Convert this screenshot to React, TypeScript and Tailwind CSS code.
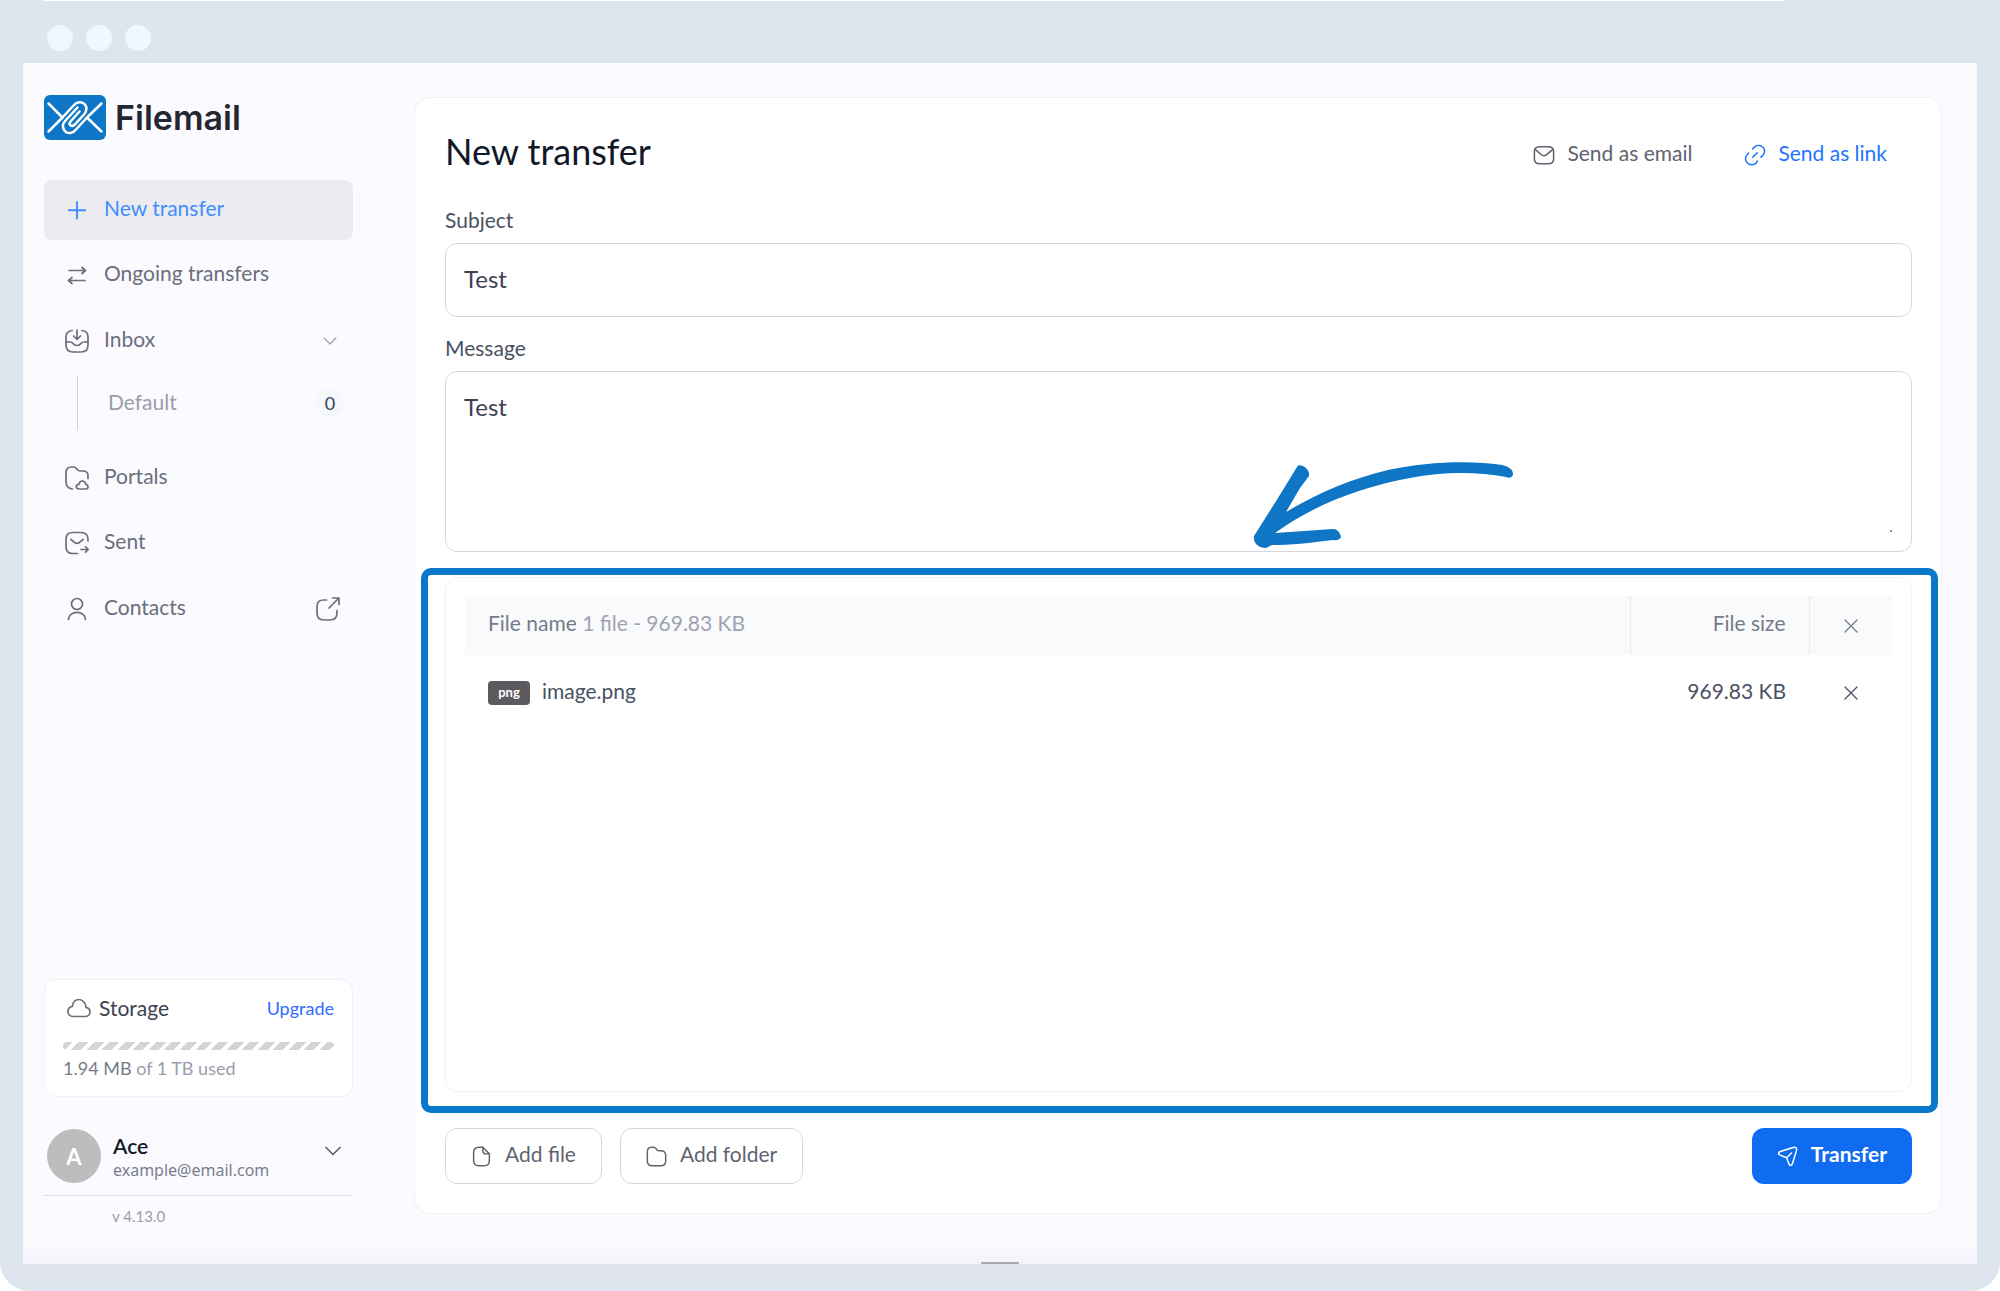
import React from "react";

type IconProps = { className?: string; children?: React.ReactNode };

const Icon = ({ className, children }: IconProps) => (
  <svg
    viewBox="0 0 24 24"
    fill="none"
    stroke="currentColor"
    strokeWidth="1.7"
    strokeLinecap="round"
    strokeLinejoin="round"
    aria-hidden="true"
    className={className}
  >
    {children}
  </svg>
);

const icons = {
  plus: <path d="M12 4v16.500M3.700 12.200h16.600" strokeWidth="1.900" />,
  transfers: (
    <path d="M4 7.500h16M17 4.500l3.500 3-3.500 3M20 17.500H4M7 14.500l-3.500 3 3.500 3" />
  ),
  inbox: (
    <>
      <path d="M12 1v9M8.500 7l3.500 3.500L15.500 7" />
      <path d="M7 1.500C3 2 1 3.500 1 8v8c0 5 2 7 7 7h8c5 0 7-2 7-7V8c0-4.500-2-6-6-6.500" />
      <path d="M1 13h4c1.500 0 2.300.5 3 1.500 1 1.500 2 2 4 2s3-.5 4-2c.7-1 1.500-1.500 3-1.500h4" />
    </>
  ),
  portals: (
    <>
      <path d="M7.500 23C3 22.500 1 20 1 15.500V6.500C1 3 3 1 6.500 1h1.800c1.500 0 2.500.6 3.300 1.600l.8 1c.6.9 1.500 1.400 3 1.400H18c3.500 0 5 2 5 5v2.500" />
      <path d="M14.500 23h6c1.500 0 2.500-1 2.500-2.300 0-1.200-.8-2-2-2.200-.5-2-1.800-3.500-3.700-3.500-1.800 0-3 1.300-3.300 3.300-1.700 0-2.700 1-2.700 2.300s1.200 2.400 3.200 2.400z" />
    </>
  ),
  sent: (
    <>
      <path d="M12.500 22.500H8c-5 0-7-2-7-7v-7c0-5 2-7 7-7h8c5 0 7 2 7 7v1.500" />
      <path d="M6 8.500l3.500 2.800c1.500 1.200 3.500 1.200 5 0L18 8.500" />
      <path d="M16 18.500h7M20.500 15.800l2.700 2.700-2.700 2.700" />
    </>
  ),
  contacts: (
    <>
      <circle cx="12" cy="7" r="5.500" />
      <path d="M3.500 22.500c0-4.300 3.800-7.200 8.500-7.200s8.500 2.900 8.500 7.200" />
    </>
  ),
  external: (
    <>
      <path d="M13 11L23 1M16.500 1H23v6.500" />
      <path d="M10.500 3H8C3 3 1 5 1 10v6c0 5 2 7 7 7h6c5 0 7-2 7-7v-2.500" />
    </>
  ),
  chevron: <path d="M5 8.500l7 7 7-7" />,
  mail: (
    <>
      <path d="M7 3h10c4 0 5.500 2 5.500 5.500v7.500c0 3.500-1.500 5.500-5.500 5.500H7c-4 0-5.500-2-5.500-5.500V8.500C1.500 5 3 3 7 3z" />
      <path d="M3 6.500l6.200 5.200c1.700 1.400 3.900 1.400 5.600 0L21 6.500" />
    </>
  ),
  link: (
    <>
      <path d="M9.500 5.500l1.300-1.800C14 1 18 .800 20.700 3.500s2.300 6.500-.7 9.500l-1.500 1.300" />
      <path d="M14.500 18.500l-1.300 2.300C10 23 6 23 3.500 20.500S1 14 3.500 11.500l1.500-1.500" />
      <path d="M9.500 14.500l5-5" />
    </>
  ),
  cloud: (
    <path d="M6.500 20.500h11.500c3 0 5-2 5-4.600 0-2.500-1.700-4.200-4-4.600C18.600 7 15.800 3.500 12 3.500S5.800 6.300 5.300 10.500C2.700 10.800 1 12.800 1 15.400c0 3 2.200 5.100 5.500 5.100z" />
  ),
  file: (
    <>
      <path d="M13.500 1.500H9c-4 0-6 2-6 6v9c0 4 2 6 6 6h6c4 0 6-2 6-6V9z" />
      <path d="M13.500 1.500V5c0 3 1 4 4 4H21" />
    </>
  ),
  folder: (
    <path d="M1.500 7c0-3.500 1.500-5.500 5-5.500h1.800c1.500 0 2.500.6 3.300 1.600l.8 1c.6.900 1.500 1.400 3 1.400H17c4 0 5.500 2 5.500 5.500v6c0 4-2 5.500-5.500 5.500H7c-3.500 0-5.500-1.500-5.500-5.500z" />
  ),
  send: (
    <>
      <path d="M3.800 6.200l14.500-4.500c3-.9 4.700.7 3.900 3.700l-4.500 14.500c-1 3-3 3-4.200.3l-2.500-6.700-6.900-2.800C1.200 9.500 1 7.200 3.800 6.200z" />
      <path d="M11 13.500l5.500-5.500" />
    </>
  ),
  close: <path d="M4 4l16 16M20 4L4 20" />,
};

const Logo = () => (
  <a href="#" className="flex items-center gap-[9px] text-[#25262f]">
    <svg viewBox="0 0 62 45" fill="none" aria-hidden="true" className="h-[45px] w-[62px]">
      <rect width="62" height="45" rx="6" fill="#0d76c6" />
      <g stroke="#fff" strokeWidth="2.500" strokeLinecap="round" strokeLinejoin="round">
        <path d="M4.500 8.500L18.500 22.500 4.500 36.500" />
        <path d="M57.500 8.500L43 22.500 57.500 36.500" />
        <path d="M18.500 22.500L29.500 10.500C33 6.500 38 6 41 9.500C43.500 13 42.500 16.500 40 19.500L30.500 29.800C27.500 32.500 24 29.500 26.500 26.500L35.500 16.500" />
        <path d="M43 22.500L32.500 34C29 38.500 23.500 39.500 20.800 36C18 32.500 18.800 28.500 21.500 25.500L33.500 12.500" />
      </g>
    </svg>
    <span className="font-['Inter'] text-[34px] leading-[45px] font-semibold">Filemail</span>
  </a>
);

const rowClass = "flex h-[60px] items-center gap-[15px] rounded-lg pr-[13px] pl-[21px]";

const Sidebar = () => (
  <aside className="flex w-[309px] shrink-0 flex-col">
    <Logo />
    <nav className="mt-10 flex flex-col text-[21px] text-[#6b6f7d]">
      <a href="#" className={`${rowClass} bg-[#ececf0] text-[#3f8cff]`}>
        <Icon className="size-6">{icons.plus}</Icon>
        <span className="pb-1">New transfer</span>
      </a>
      <a href="#" className={`${rowClass} mt-[5px]`}>
        <Icon className="size-6">{icons.transfers}</Icon>
        <span className="pb-1">Ongoing transfers</span>
      </a>
      <a href="#" className={`${rowClass} mt-[6px]`}>
        <Icon className="size-6">{icons.inbox}</Icon>
        <span className="pb-1">Inbox</span>
        <Icon className="ml-auto size-5 text-[#a5a7b0]">{icons.chevron}</Icon>
      </a>
      <a
        href="#"
        className="mt-[5px] ml-[33px] flex h-[54px] items-center justify-between border-l border-[#cfcfd8] pr-[9px] pl-[30px] text-[#9a9daa]"
      >
        <span className="pb-[2px]">Default</span>
        <span className="flex size-7 items-center justify-center rounded-full bg-[#f6f7fa] text-[18px] text-[#33415c]">
          0
        </span>
      </a>
      <a href="#" className={`${rowClass} mt-[18px]`}>
        <Icon className="size-6">{icons.portals}</Icon>
        <span className="pb-1">Portals</span>
      </a>
      <a href="#" className={`${rowClass} mt-[5px]`}>
        <Icon className="size-6">{icons.sent}</Icon>
        <span className="pb-1">Sent</span>
      </a>
      <a href="#" className={`${rowClass} mt-[6px]`}>
        <Icon className="size-6">{icons.contacts}</Icon>
        <span className="pb-1">Contacts</span>
        <Icon className="ml-auto size-6">{icons.external}</Icon>
      </a>
    </nav>

    <section className="mt-auto rounded-xl border border-[#f0f0f5] bg-white px-[18px] pt-4 pb-4">
      <div className="flex items-center gap-2 pl-1">
        <Icon className="size-6 text-[#6b6f7d]">{icons.cloud}</Icon>
        <h2 className="text-[21px] leading-6 text-[#3c4150]">Storage</h2>
        <a href="#" className="ml-auto text-[18px] leading-6 text-[#2f6bff]">
          Upgrade
        </a>
      </div>
      <div className="mt-[22px] h-2 rounded-full bg-[repeating-linear-gradient(135deg,#d4d4d4_0_7px,#fff_7px_11px)]" />
      <p className="mt-[6px] text-[18px] leading-6 text-[#9a9daa]">
        <span className="text-[#777b89]">1.94 MB</span> of 1 TB used
      </p>
    </section>

    <button
      type="button"
      className="mt-8 flex items-center gap-3 border-b border-[#dcdce2] pb-3 pl-[3px] text-left"
    >
      <span className="flex size-[54px] items-center justify-center rounded-full bg-[#bdbdbd] text-[22px] font-bold text-white">
        A
      </span>
      <span className="flex flex-col pt-[3px]">
        <span className="text-[21px] leading-6 font-semibold text-[#111827]">Ace</span>
        <span className="font-['Noto_Sans'] text-[16px] leading-6 text-[#7b7d8e]">
          example@email.com
        </span>
      </span>
      <Icon className="mr-2 mb-[10px] ml-auto size-6 text-[#5f6370]">{icons.chevron}</Icon>
    </button>
    <p className="mt-2 pl-[68px] text-[15px] leading-6 text-[#9a9daa]">v 4.13.0</p>
  </aside>
);

const files = [{ type: "png", name: "image.png", size: "969.83 KB" }];

const FileTable = () => (
  <table className="w-full table-fixed text-[21px] text-[#4a5163]">
    <colgroup>
      <col />
      <col className="w-[179px]" />
      <col className="w-[83px]" />
    </colgroup>
    <thead className="bg-[#f9fafc] text-[#777b89]">
      <tr className="h-[59px]">
        <th className="px-[23px] pb-[6px] text-left font-normal">
          File name <span className="text-[#9fa2b0]">1 file - 969.83 KB</span>
        </th>
        <th className="border-x border-[#e8e8ed] px-[23px] pb-[6px] text-right font-normal">
          File size
        </th>
        <th>
          <button type="button" aria-label="Remove all files" className="flex w-full justify-center">
            <Icon className="size-[18px]">{icons.close}</Icon>
          </button>
        </th>
      </tr>
    </thead>
    <tbody>
      {files.map((file) => (
        <tr key={file.name} className="h-[76px]">
          <td className="px-[23px]">
            <span className="flex items-center gap-3">
              <span className="flex h-6 w-[42px] items-center justify-center rounded-sm bg-[#5c5a5f] pb-[2px] text-[13px] leading-4 font-bold text-white">
                {file.type}
              </span>
              <span className="pb-1">{file.name}</span>
            </span>
          </td>
          <td className="px-[23px] pb-1 text-right">{file.size}</td>
          <td>
            <button
              type="button"
              aria-label={`Remove ${file.name}`}
              className="flex w-full justify-center"
            >
              <Icon className="size-[18px]">{icons.close}</Icon>
            </button>
          </td>
        </tr>
      ))}
    </tbody>
  </table>
);

const TransferForm = () => (
  <form className="relative mt-[2px] mb-[14px] flex min-w-0 flex-1 flex-col rounded-2xl border border-[#f0f0f5] bg-white pt-[31px] pr-[29px] pb-[29px] pl-[30px]">
    <div className="flex items-center justify-between">
      <h1 className="text-[36px] leading-[44px] text-[#111827]">New transfer</h1>
      <div className="flex gap-[52px] pt-2 pr-[25px] text-[21px]">
        <button type="button" className="flex items-center gap-3 text-[#5f6370]">
          <Icon className="size-[22px]">{icons.mail}</Icon>
          <span className="pb-1">Send as email</span>
        </button>
        <button type="button" className="flex items-center gap-3 text-[#1f75fe]">
          <Icon className="size-[22px]">{icons.link}</Icon>
          <span className="pb-1">Send as link</span>
        </button>
      </div>
    </div>

    <label htmlFor="subject" className="mt-8 text-[21px] leading-[30px] text-[#4a5163]">
      Subject
    </label>
    <input
      id="subject"
      defaultValue="Test"
      className="mt-2 h-[74px] rounded-xl border border-[#d6d6de] px-[18px] pb-1 text-[24px] text-[#3c4150]"
    />
    <label htmlFor="message" className="mt-4 text-[21px] leading-[30px] text-[#4a5163]">
      Message
    </label>
    <div className="relative mt-2 flex flex-col">
      <textarea
        id="message"
        defaultValue="Test"
        className="h-[181px] resize-none rounded-xl border border-[#d6d6de] px-[18px] py-5 text-[24px] leading-[30px] text-[#3c4150]"
      />
      <span className="absolute right-5 bottom-5 size-[2px] bg-[#8d8f99]" />
    </div>

    <div className="mt-4 -mr-[26px] -ml-6 flex flex-1 flex-col rounded-[10px] border-[7px] border-[#0a78c8] pt-[2px] pr-[19px] pb-[14px] pl-[17px]">
      <div className="flex-1 rounded-xl border border-[#f3f3f7] px-[19px] pt-[18px]">
        <FileTable />
      </div>
    </div>

    <div className="mt-[15px] flex items-center gap-[18px] text-[21px]">
      <button
        type="button"
        className="flex h-14 items-center gap-[13px] rounded-xl border border-[#d6d6de] px-[25px] text-[#5f6370]"
      >
        <Icon className="size-[21px]">{icons.file}</Icon>
        <span className="pb-1">Add file</span>
      </button>
      <button
        type="button"
        className="flex h-14 items-center gap-[13px] rounded-xl border border-[#d6d6de] px-[25px] text-[#5f6370]"
      >
        <Icon className="size-[21px]">{icons.folder}</Icon>
        <span className="pb-1">Add folder</span>
      </button>
      <button
        type="submit"
        className="ml-auto flex h-14 items-center gap-[13px] rounded-xl bg-[#0f6cf0] px-[25px] font-bold text-white"
      >
        <Icon className="size-[21px]">{icons.send}</Icon>
        <span className="pb-1">Transfer</span>
      </button>
    </div>

    {/* hand drawn pointer over the file list */}
    <svg
      viewBox="0 0 320 120"
      aria-hidden="true"
      className="pointer-events-none absolute top-[343px] left-1/2 ml-[42px] h-[120px] w-[320px]"
    >
      <path
        fill="#0f76c6"
        d="M34 95L58 57L77 26Q78 23 83 25Q90 29 89 35L80 47L66 71C98 52 130 38 168 29C205 21 250 19 282 24Q294 27 293 34Q291 38 286 36C258 31 225 30 190 37C140 46 92 65 55 92L113 88Q119 88 121 96Q119 100 113 99C90 102 70 104 52 104L46 107Q40 107 36 103Q33 99 34 95Z"
      />
    </svg>
  </form>
);

const App = () => {
  return (
    <div className="flex min-h-screen flex-col overflow-hidden rounded-b-[30px] bg-[#dbe6ef] font-['Lato',sans-serif]">
      <div className="mr-[215px] ml-[43px] h-px bg-white" />
      <div className="flex h-[62px] items-center gap-[13px] px-[47px] pt-3">
        <span className="size-[26px] rounded-full bg-[#edf8ff]" />
        <span className="size-[26px] rounded-full bg-[#edf8ff]" />
        <span className="size-[26px] rounded-full bg-[#edf8ff]" />
      </div>
      <div className="mx-[23px] flex flex-1 flex-col bg-[#fafaff]">
        <div className="flex flex-1 gap-[61px] pt-8 pr-[35px] pl-[21px]">
          <Sidebar />
          <TransferForm />
        </div>
        <div className="flex h-9 items-end justify-center bg-linear-to-b from-[#fafaff] from-40% to-[#f2f2f9]">
          <span className="h-[2px] w-[38px] bg-[#a9a9b3]" />
        </div>
      </div>
      <div className="h-[27px] bg-linear-to-b from-[#e0e2ed] to-[#dbe6ef]" />
    </div>
  );
};

export default App;
